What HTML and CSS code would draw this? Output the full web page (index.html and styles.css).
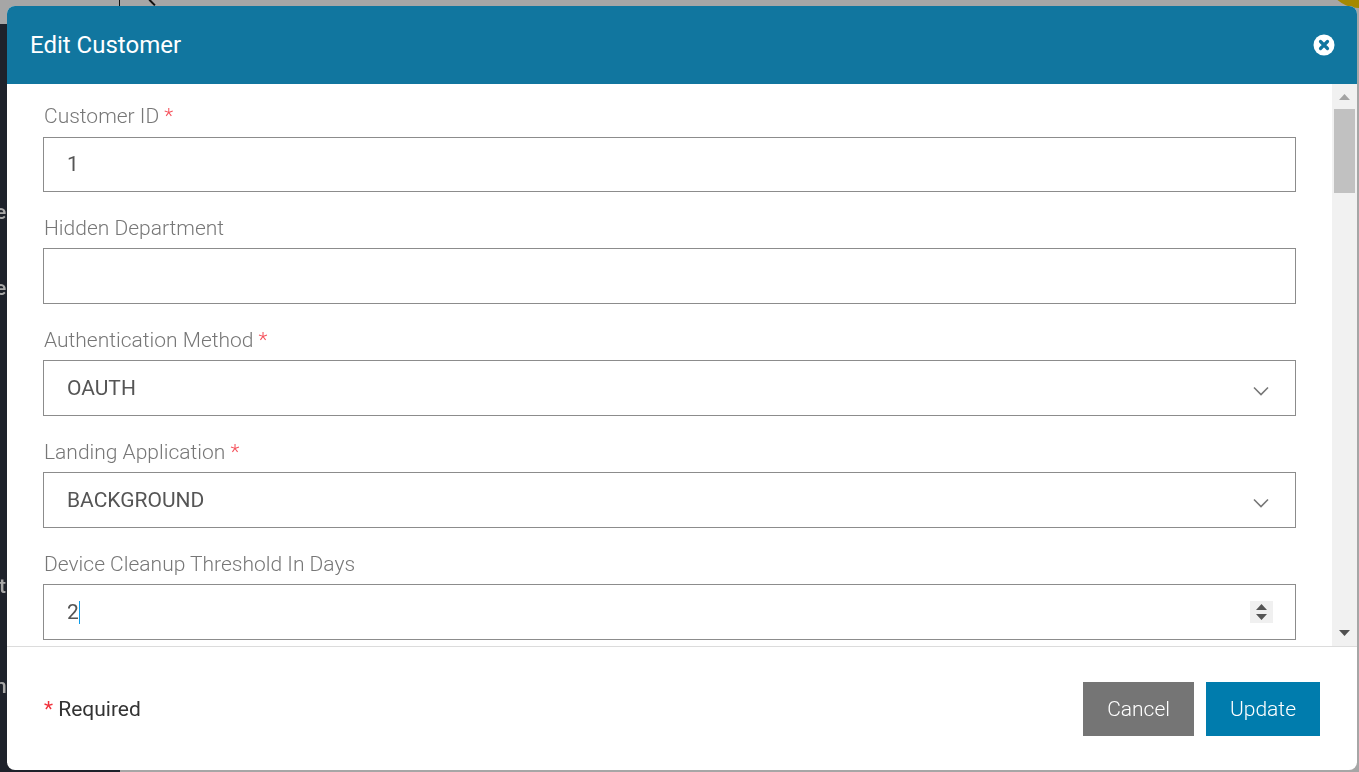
FILE: index.html
```html
<!DOCTYPE html>
<html lang="en">
  <head>
    <meta charset="UTF-8" />
    <meta name="viewport" content="width=device-width, initial-scale=1.0" />
    <title>Edit Customer</title>
    <link rel="stylesheet" href="styles.css">
  </head>
  <body>
    <!-- page behind the dialog, dimmed -->
    <div class="backdrop">
      <div class="top-strip">
        <span class="top-divider"></span>
        <span class="top-mark"></span>
        <span class="top-badge"></span>
      </div>
      <div class="side-rail">
        <span class="rail-letter rail-letter-1">e</span>
        <span class="rail-letter rail-letter-2">e</span>
        <span class="rail-letter rail-letter-3">t</span>
        <span class="rail-letter rail-letter-4">n</span>
      </div>
    </div>

    <div class="modal">
      <div class="modal-header">
        <h3>Edit Customer</h3>
        <svg class="modal-close" viewBox="0 0 22 22" width="22" height="22">
          <circle cx="11" cy="11" r="10.5" fill="#fff" />
          <path d="M7.5 7.5l7 7M14.5 7.5l-7 7" stroke="#11769f" stroke-width="3.2" stroke-linecap="round" />
        </svg>
      </div>

      <div class="modal-body">
        <div class="form">
          <div class="field field-first">
            <label>Customer ID <span class="req">*</span></label>
            <div class="input">1</div>
          </div>
          <div class="field">
            <label>Hidden Department</label>
            <div class="input"></div>
          </div>
          <div class="field">
            <label>Authentication Method <span class="req">*</span></label>
            <div class="input select">
              <span>OAUTH</span>
              <svg class="chevron" viewBox="0 0 16 10" width="16" height="10">
                <path d="M1 1.5l7 7 7-7" fill="none" stroke="#777" stroke-width="1.6" />
              </svg>
            </div>
          </div>
          <div class="field">
            <label>Landing Application <span class="req">*</span></label>
            <div class="input select">
              <span>BACKGROUND</span>
              <svg class="chevron" viewBox="0 0 16 10" width="16" height="10">
                <path d="M1 1.5l7 7 7-7" fill="none" stroke="#777" stroke-width="1.6" />
              </svg>
            </div>
          </div>
          <div class="field">
            <label>Device Cleanup Threshold In Days</label>
            <div class="input number">
              <span class="value">2<span class="caret"></span></span>
              <span class="spinner">
                <svg viewBox="0 0 23 22" width="23" height="22">
                  <path d="M11.5 3l5.500 6H6zM6 13h11l-5.500 6z" fill="#555" />
                </svg>
              </span>
            </div>
          </div>
        </div>

        <div class="scrollbar">
          <svg class="scroll-arrow" viewBox="0 0 11 6" width="11" height="6"><path d="M5.500 0l5.500 6H0z" fill="#a3a3a3" /></svg>
          <div class="scroll-thumb"></div>
          <svg class="scroll-arrow scroll-arrow-down" viewBox="0 0 11 6" width="11" height="6"><path d="M0 0h11L5.500 6z" fill="#505050" /></svg>
        </div>
      </div>

      <div class="modal-footer">
        <div class="required-note"><span class="req">*</span> Required</div>
        <div class="actions">
          <button class="btn btn-cancel">Cancel</button>
          <button class="btn btn-update">Update</button>
        </div>
      </div>
    </div>
  </body>
</html>
```

FILE: styles.css
```css
html,
body {
  height: 100%;
}

body {
  margin: 0;
  overflow: hidden;
  background-color: #a6a6a6;
  font-family: Roboto, "Liberation Sans", Arial, sans-serif;
}

.backdrop {
  position: fixed;
  top: 0;
  left: 0;
  right: 0;
  bottom: 0;
}

.top-strip {
  position: relative;
  height: 24px;
  overflow: hidden;
}

.top-divider {
  position: absolute;
  left: 119px;
  top: 0;
  width: 1px;
  height: 6px;
  background-color: #111;
}

.top-mark {
  position: absolute;
  left: 150px;
  top: -1px;
  width: 8px;
  height: 2px;
  background-color: #111;
  transform: rotate(45deg);
  transform-origin: left top;
}

.top-badge {
  position: absolute;
  left: 1326px;
  top: -58px;
  width: 66px;
  height: 66px;
  border-radius: 50%;
  background-color: #a58900;
}

.side-rail {
  position: relative;
  width: 120px;
  height: 748px;
  background-color: #1e222b;
}

.rail-letter {
  position: absolute;
  left: -5px;
  font-size: 21px;
  font-weight: 500;
  line-height: 20px;
  color: #a8a8a8;
}

.rail-letter-1 { top: 178px; }
.rail-letter-2 { top: 254px; }
.rail-letter-3 { top: 552px; left: -1px; }
.rail-letter-4 { top: 652px; left: -5px; }

.modal {
  position: fixed;
  top: 6px;
  left: 7px;
  width: 1350px;
  height: 764px;
  display: flex;
  flex-direction: column;
  background-color: white;
  border-radius: 8px;
  overflow: hidden;
}

.modal-header {
  flex: none;
  height: 78px;
  display: flex;
  align-items: center;
  justify-content: space-between;
  padding: 0 22px 0 23px;
  background-color: #11769f;
  color: white;
}

.modal-header h3 {
  margin: 0;
  font-size: 24px;
  font-weight: 400;
}

.modal-body {
  flex: none;
  height: 562px;
  display: flex;
  border-bottom: 1px solid #dcdcdc;
}

.form {
  flex: 1;
  padding: 20px 36px 0;
  overflow: hidden;
}

.field {
  height: 112px;
}

.field label {
  display: block;
  height: 32px;
  font-size: 21px;
  font-weight: 300;
  line-height: 25px;
  color: #777;
  padding-left: 1px;
}

.field label .req {
  color: #f5505a;
}

.field-first label {
  height: 33px;
}

.field-first .input {
  height: 55px;
  padding-bottom: 1px;
}

.req {
  color: #f0323c;
}

.input {
  box-sizing: border-box;
  height: 56px;
  display: flex;
  align-items: center;
  justify-content: space-between;
  padding: 0 23px;
  border: 1px solid #8c8c8c;
  font-size: 21px;
  font-weight: 400;
  color: #555;
}

.select .chevron {
  margin-top: 5px;
  margin-right: 3px;
}

.value {
  display: inline-flex;
  align-items: center;
}

.caret {
  width: 1px;
  height: 23px;
  background-color: #0a9bea;
}

.spinner {
  display: flex;
  margin-right: -1px;
  background-color: #f0f0f0;
}

.scrollbar {
  flex: none;
  width: 25px;
  display: flex;
  flex-direction: column;
  align-items: center;
  background-color: #f1f1f1;
}

.scroll-arrow {
  margin-top: 10px;
}

.scroll-thumb {
  width: 21px;
  height: 84px;
  margin-top: 9px;
  background-color: #c1c1c1;
}

.scroll-arrow-down {
  margin-top: auto;
  margin-bottom: 10px;
}

.modal-footer {
  flex: 1;
  display: flex;
  align-items: center;
  justify-content: space-between;
  padding: 0 37px;
}

.required-note {
  font-size: 21px;
  font-weight: 400;
  color: #333;
}

.actions {
  display: flex;
  gap: 12px;
}

.btn {
  height: 54px;
  padding: 0 24px;
  border: none;
  color: white;
  font-family: inherit;
  font-size: 21px;
  font-weight: 300;
  cursor: pointer;
}

.btn-cancel {
  background-color: #757575;
}

.btn-update {
  background-color: #007cad;
}
```
